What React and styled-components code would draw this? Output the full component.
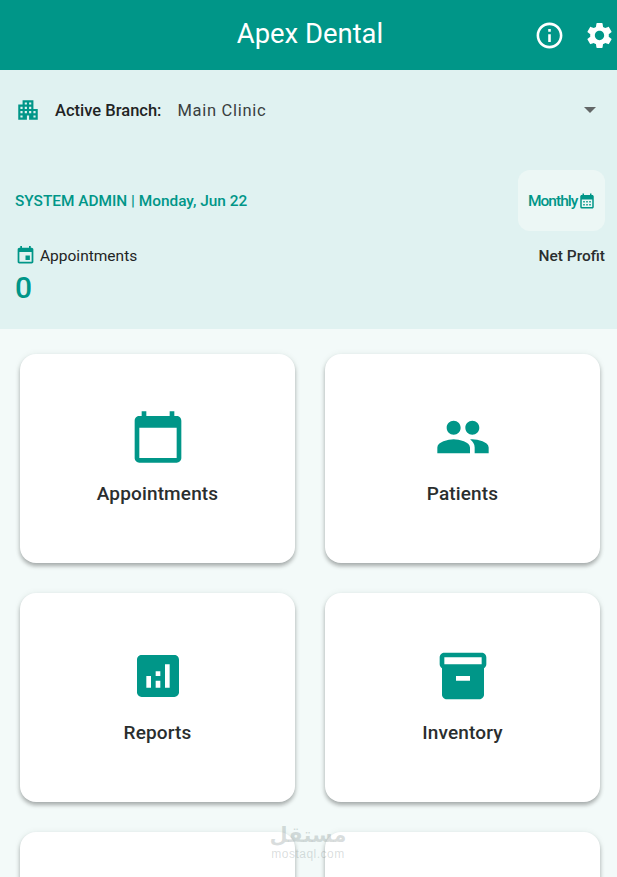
import React from "react";
import styled, { createGlobalStyle } from "styled-components";

const GlobalStyle = createGlobalStyle`
  html, body {
    margin: 0;
    padding: 0;
    background: #f3faf9;
  }
  * {
    box-sizing: border-box;
  }
`;

const Page = styled.div`
  position: relative;
  width: 100%;
  height: 100vh;
  overflow: hidden;
  background: #f3faf9;
  font-family: Roboto, "Liberation Sans", sans-serif;
  color: #1f2424;
`;

const AppBar = styled.header`
  position: relative;
  height: 70px;
  padding: 0 0 2px 3px;
  background: #009688;
  display: flex;
  align-items: center;
  justify-content: center;
`;

const Title = styled.h1`
  margin: 0;
  font-size: 27.4px;
  font-weight: 400;
  color: #fff;
`;

const Actions = styled.div`
  position: absolute;
  top: 0;
  bottom: 0;
  right: 2px;
  display: flex;
  align-items: center;
  gap: 19px;
  color: #fff;
`;

const Panel = styled.section`
  height: 259px;
  background: #e0f2f1;
  padding: 20px 12px 0 15px;
`;

const BranchRow = styled.div`
  height: 40px;
  display: flex;
  align-items: center;
  color: #009688;
`;

const BranchLabel = styled.span`
  margin-left: 14px;
  font-size: 16.5px;
  font-weight: 500;
  color: #1f2424;
`;

const BranchValue = styled.span`
  margin-left: 16px;
  font-size: 16.5px;
  letter-spacing: 0.7px;
  color: #3a3f3f;
`;

const Caret = styled.span`
  margin-left: auto;
  margin-right: 9px;
  width: 0;
  height: 0;
  border-left: 6px solid transparent;
  border-right: 6px solid transparent;
  border-top: 6px solid #636767;
`;

const DateRow = styled.div`
  margin-top: 40px;
  display: flex;
  align-items: center;
  justify-content: space-between;
`;

const DateText = styled.span`
  padding-top: 1px;
  font-size: 15.4px;
  font-weight: 500;
  color: #009688;
`;

const PeriodButton = styled.button`
  width: 87px;
  height: 61px;
  border: 0;
  border-radius: 12px;
  padding: 0 0 0 10px;
  background: #ecf7f5;
  color: #009688;
  display: flex;
  align-items: center;
  gap: 1px;
  font-family: inherit;
  font-size: 15.5px;
  font-weight: 500;
  letter-spacing: -1px;
`;

const StatsRow = styled.div`
  margin-top: 14px;
  display: flex;
  align-items: center;
  justify-content: space-between;
  font-size: 15.5px;
`;

const StatLabel = styled.div`
  display: flex;
  align-items: center;
  gap: 4px;
  color: #1f2424;
`;

const NetProfit = styled.span`
  font-weight: 500;
  color: #2a2e2e;
`;

const StatIcon = styled.span`
  display: flex;
  color: #009688;
`;

const StatValue = styled.div`
  margin-top: 4px;
  font-size: 30px;
  line-height: 36px;
  font-weight: 500;
  color: #009688;
`;

const CardGrid = styled.main`
  padding: 25px 17px 0 20px;
  display: grid;
  grid-template-columns: 275px 275px;
  grid-auto-rows: 209px;
  gap: 30px;
`;

const Card = styled.div`
  background: #fff;
  border-radius: 16px;
  padding-top: 55px;
  display: flex;
  flex-direction: column;
  align-items: center;
  box-shadow: 0 3px 4px rgba(0, 0, 0, 0.3), 0 0 7px rgba(0, 60, 55, 0.06);
  color: #009688;
`;

const CardLabel = styled.span`
  margin-top: 17px;
  font-size: 19px;
  line-height: 24px;
  font-weight: 500;
  letter-spacing: 0.15px;
  color: #2a2e2e;
`;

const Watermark = styled.div`
  position: absolute;
  left: 260px;
  top: 822px;
  width: 96px;
  display: flex;
  flex-direction: column;
  align-items: center;
  color: rgba(120, 135, 135, 0.28);
  pointer-events: none;
`;

const WatermarkArabic = styled.span`
  font-family: "DejaVu Sans", sans-serif;
  font-size: 21px;
  line-height: 26px;
  font-weight: 700;
`;

const WatermarkLatin = styled.span`
  font-family: "Liberation Sans", sans-serif;
  font-size: 12px;
  line-height: 12px;
  letter-spacing: 0.5px;
`;

const Icon = ({ d, size }) => (
  <svg width={size} height={size} viewBox="0 0 24 24" fill="currentColor">
    <path d={d} />
  </svg>
);

const icons = {
  info: "M11 7h2v2h-2zm0 4h2v6h-2zm1-9C6.48 2 2 6.48 2 12s4.48 10 10 10 10-4.48 10-10S17.52 2 12 2zm0 18c-4.41 0-8-3.59-8-8s3.59-8 8-8 8 3.59 8 8-3.59 8-8 8z",
  settings:
    "M19.14 12.94c.04-.3.06-.61.06-.94 0-.32-.02-.64-.07-.94l2.03-1.58c.18-.14.23-.41.12-.61l-1.92-3.32c-.12-.22-.37-.29-.59-.22l-2.39.96c-.5-.38-1.03-.7-1.62-.94l-.36-2.54c-.04-.24-.24-.41-.48-.41h-3.84c-.24 0-.43.17-.47.41l-.36 2.54c-.59.24-1.13.57-1.62.94l-2.39-.96c-.22-.08-.47 0-.59.22L2.74 8.87c-.12.21-.08.47.12.61l2.03 1.58c-.05.3-.09.63-.09.94s.02.64.07.94l-2.03 1.58c-.18.14-.23.41-.12.61l1.92 3.32c.12.22.37.29.59.22l2.39-.96c.5.38 1.03.7 1.62.94l.36 2.54c.05.24.24.41.48.41h3.84c.24 0 .44-.17.47-.41l.36-2.54c.59-.24 1.13-.56 1.62-.94l2.39.96c.22.08.47 0 .59-.22l1.92-3.32c.12-.22.07-.47-.12-.61l-2.01-1.58zM12 15.6c-1.98 0-3.6-1.62-3.6-3.6s1.62-3.6 3.6-3.6 3.6 1.62 3.6 3.6-1.62 3.6-3.6 3.6z",
  apartment:
    "M17 11V3H7v4H3v14h8v-4h2v4h8V11h-4zM7 19H5v-2h2v2zm0-4H5v-2h2v2zm0-4H5V9h2v2zm4 4H9v-2h2v2zm0-4H9V9h2v2zm0-4H9V5h2v2zm4 8h-2v-2h2v2zm0-4h-2V9h2v2zm0-4h-2V5h2v2zm4 12h-2v-2h2v2zm0-4h-2v-2h2v2z",
  event:
    "M17 12h-5v5h5v-5zM16 1v2H8V1H6v2H5c-1.11 0-1.99.9-1.99 2L3 19c0 1.1.89 2 2 2h14c1.1 0 2-.9 2-2V5c0-1.1-.9-2-2-2h-1V1h-2zm3 18H5V8h14v11z",
  month:
    "M19 4h-1V2h-2v2H8V2H6v2H5c-1.11 0-1.99.9-1.99 2L3 20a2 2 0 0 0 2 2h14c1.1 0 2-.9 2-2V6c0-1.1-.9-2-2-2zm0 16H5V10h14v10zM9 14H7v-2h2v2zm4 0h-2v-2h2v2zm4 0h-2v-2h2v2zm-8 4H7v-2h2v2zm4 0h-2v-2h2v2zm4 0h-2v-2h2v2z",
  calendar:
    "M20 3h-1V1h-2v2H7V1H5v2H4c-1.1 0-2 .9-2 2v16c0 1.1.9 2 2 2h16c1.1 0 2-.9 2-2V5c0-1.1-.9-2-2-2zm0 18H4V8h16v13z",
  people:
    "M16 11c1.66 0 2.99-1.34 2.99-3S17.66 5 16 5c-1.66 0-3 1.34-3 3s1.34 3 3 3zm-8 0c1.66 0 2.99-1.34 2.99-3S9.66 5 8 5C6.34 5 5 6.34 5 8s1.34 3 3 3zm0 2c-2.33 0-7 1.17-7 3.5V19h14v-2.5c0-2.33-4.67-3.5-7-3.5zm8 0c-.29 0-.62.02-.97.05 1.16.84 1.97 1.97 1.97 3.45V19h6v-2.5c0-2.33-4.67-3.5-7-3.5z",
  analytics:
    "M19 3H5c-1.1 0-2 .9-2 2v14c0 1.1.9 2 2 2h14c1.1 0 2-.9 2-2V5c0-1.1-.9-2-2-2zM9 17H7v-5h2v5zm4 0h-2v-3h2v3zm0-5h-2v-2h2v2zm4 5h-2V7h2v10z",
  inventory:
    "M20 2H4c-1 0-2 .9-2 2v3.01c0 .72.43 1.34 1 1.69V20c0 1.1 1.1 2 2 2h14c.9 0 2-.9 2-2V8.7c.57-.35 1-.97 1-1.69V4c0-1.1-1-2-2-2zm-5 12H9v-2h6v2zm5-7H4V4l16-.02V7z",
};

const cards = [
  { label: "Appointments", icon: icons.calendar },
  { label: "Patients", icon: icons.people },
  { label: "Reports", icon: icons.analytics },
  { label: "Inventory", icon: icons.inventory },
  { label: "", icon: null },
  { label: "", icon: null },
];

export default function App() {
  return (
    <Page>
      <GlobalStyle />
      <AppBar>
        <Title>Apex Dental</Title>
        <Actions>
          <Icon d={icons.info} size={31} />
          <Icon d={icons.settings} size={31} />
        </Actions>
      </AppBar>
      <Panel>
        <BranchRow>
          <Icon d={icons.apartment} size={26} />
          <BranchLabel>Active Branch:</BranchLabel>
          <BranchValue>Main Clinic</BranchValue>
          <Caret />
        </BranchRow>
        <DateRow>
          <DateText>SYSTEM ADMIN | Monday, Jun 22</DateText>
          <PeriodButton>
            Monthly
            <Icon d={icons.month} size={18} />
          </PeriodButton>
        </DateRow>
        <StatsRow>
          <StatLabel>
            <StatIcon>
              <Icon d={icons.event} size={21} />
            </StatIcon>
            Appointments
          </StatLabel>
          <NetProfit>Net Profit</NetProfit>
        </StatsRow>
        <StatValue>0</StatValue>
      </Panel>
      <CardGrid>
        {cards.map((card, i) => (
          <Card key={i}>
            {card.icon && <Icon d={card.icon} size={56} />}
            {card.label && <CardLabel>{card.label}</CardLabel>}
          </Card>
        ))}
      </CardGrid>
      <Watermark>
        <WatermarkArabic>مستقل</WatermarkArabic>
        <WatermarkLatin>mostaql.com</WatermarkLatin>
      </Watermark>
    </Page>
  );
}
